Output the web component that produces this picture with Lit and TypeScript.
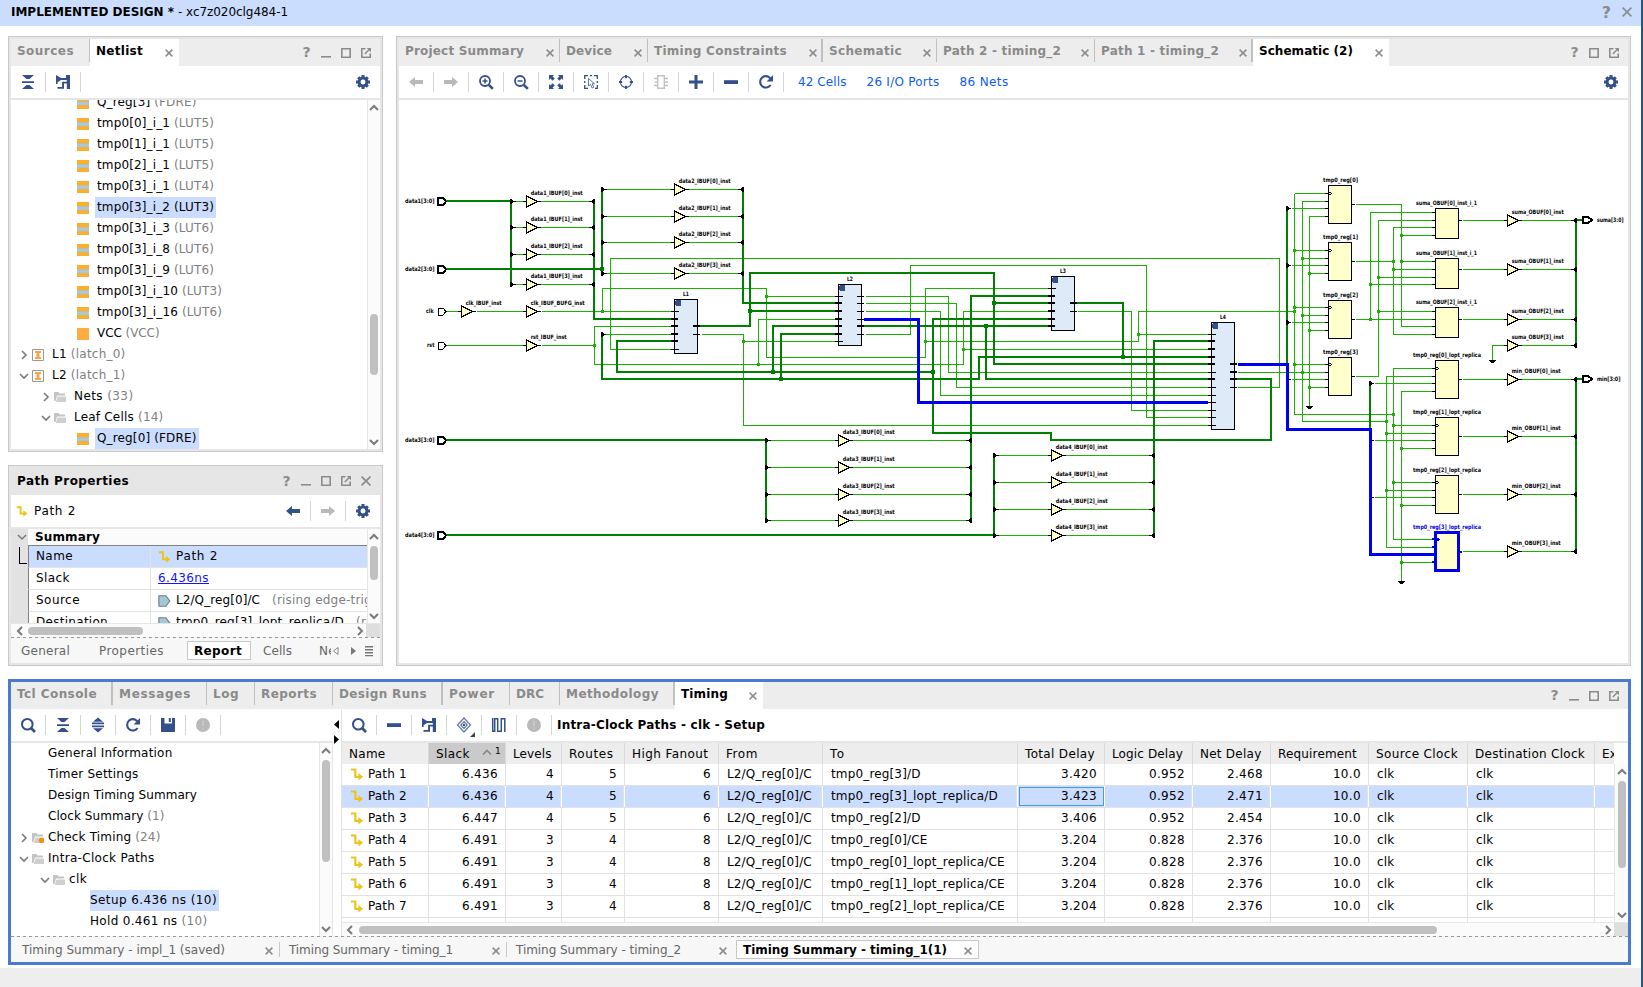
import { LitElement, html, svg, css, nothing } from "lit";
import { customElement } from "lit/decorators.js";

type Pt = [number, number];

const BLUE = "#34508a";
const GREY = "#8c8c8c";

const icons: Record<string, unknown> = {
  collapse: svg`<path fill=${BLUE} d="M2 1h12l-4.5 4h-3zM2 7.2h12v1.8H2zM2 15h12l-4.500-4h-3z"/>`,
  expand: svg`<path fill=${BLUE} d="M8 .6l5 4.200H3zM2 5.600h12v1.600H2zM2 8.600h12v1.600H2zM8 15.400l5-4.200H3z"/>`,
  hier: svg`<path fill=${BLUE} d="M1 1l5 3h5V1h4v14h-3.200V9.500H9v5.300H2.500v-1.700h4.600V7.800h4.700V5.900H6L2.600 8.200V10H1z"/>`,
  gear: svg`<circle cx="8" cy="8" r="3.900" fill="none" stroke=${BLUE} stroke-width="3"/><path stroke=${BLUE} stroke-width="3" d="M8 1v3M8 12v3M1 8h3M12 8h3M3.200 3.200l2 2M10.800 10.800l2 2M12.800 3.200l-2 2M5.200 10.800l-2 2"/><circle cx="8" cy="8" r="2.300" fill="#fff"/>`,
  back: svg`<path fill=${BLUE} d="M1 8l6-5v3h8v4H7v3z"/>`,
  backOff: svg`<path fill="#b9b9b9" d="M1 8l6-5v3h8v4H7v3z"/>`,
  fwdOff: svg`<path fill="#b9b9b9" d="M15 8L9 3v3H1v4h8v3z"/>`,
  zoomIn: svg`<circle cx="7" cy="7" r="5" fill="none" stroke=${BLUE} stroke-width="1.800"/><path stroke=${BLUE} stroke-width="2.600" d="M10.800 10.800l4 4"/><path stroke=${BLUE} stroke-width="1.500" d="M4.500 7h5M7 4.500v5"/>`,
  zoomOut: svg`<circle cx="7" cy="7" r="5" fill="none" stroke=${BLUE} stroke-width="1.800"/><path stroke=${BLUE} stroke-width="2.600" d="M10.800 10.800l4 4"/><path stroke=${BLUE} stroke-width="1.500" d="M4.500 7h5"/>`,
  fit: svg`<path fill=${BLUE} d="M1 1h5L4.600 2.400l2.200 2.200-2.200 2.200-2.200-2.200L1 6zM15 1v5l-1.400-1.400-2.200 2.200-2.200-2.200 2.200-2.200L10 1zM1 15v-5l1.400 1.400 2.200-2.200 2.200 2.200-2.200 2.200L6 15zM15 15h-5l1.400-1.400-2.200-2.200 2.200-2.200 2.200 2.200L15 10z"/>`,
  select: svg`<path fill="none" stroke=${BLUE} stroke-width="1.300" d="M1.700 5V1.700H5M11 1.700h3.300V5M1.700 11v3.300H5M7 1.700h2M1.700 7v2M14.300 7v2M12 14.300h2.300V11"/><path fill="#fff" stroke="#4d669c" stroke-width=".9" d="M5.500 4.500v7.500l2-1.600 1.600 3.600 1.700-.8-1.600-3.400h2.300z"/>`,
  target: svg`<circle cx="8" cy="8" r="5.600" fill="none" stroke=${BLUE} stroke-width="1.100"/><path stroke=${BLUE} stroke-width="1.900" d="M8 1v3.200M8 11.800V15M1 8h3.200M11.800 8H15"/>`,
  chip: svg`<path fill="none" stroke="#c2c2c2" stroke-width="1.400" d="M4.700 1.700h6.600v12.600H4.700zM1 4.500h3.500M1 11.500h3.500M11.500 4.500H15M11.500 11.500H15M1.700 8h3M11.500 8H15"/>`,
  plus: svg`<path fill=${BLUE} d="M6.500 1h3v5.500H15v3H9.500V15h-3V9.500H1v-3h5.500z"/>`,
  minus: svg`<path fill=${BLUE} d="M1 6.200h14v3.800H1z"/>`,
  refresh: svg`<path fill="none" stroke=${BLUE} stroke-width="2.100" d="M12.600 11A5.700 5.700 0 1 1 12.300 4.300"/><path fill=${BLUE} d="M15 1v6.500H8.600z"/>`,
  search: svg`<circle cx="7.300" cy="7.300" r="5.300" fill="none" stroke=${BLUE} stroke-width="2"/><path stroke=${BLUE} stroke-width="2.600" d="M11 11l4 4"/>`,
  save: svg`<path fill=${BLUE} d="M1 1h3.500v5.500h7.500V1H15v14H1z"/><path fill=${BLUE} d="M8.800 1h2v4h-2z"/>`,
  alert: svg`<circle cx="8" cy="8" r="7" fill="#b9b9b9"/><path fill="#c9c9c9" d="M7.100 3.500h1.800v5.600H7.100zM7.100 10.600h1.800v1.900H7.100z"/>`,
  diamond: svg`<path fill="none" stroke="#5e78ad" stroke-width="1.200" d="M8 1l6.500 7L8 15 1.500 8zM8 4.500L11.300 8 8 11.500 4.700 8z"/><circle cx="8" cy="8" r="1.200" fill=${BLUE}/>`,
  wave: svg`<path fill="none" stroke=${BLUE} stroke-width="1.500" d="M1 14.200h2.700V1.800h3v12.400h3.600V1.800h3.500V15M1.700 14.200V1"/>`,
  path: svg`<path fill="none" stroke="#ecc51c" stroke-width="2.300" d="M1 2.700h4.700v7.800H10"/><path fill="#ecc51c" d="M9 6.500l5 4-5 4z"/>`,
  pin: svg`<path fill="#a5c6d6" stroke="#6d7f88" stroke-width="1.300" d="M1 2h8l4.500 6-4.500 6H1z"/>`,
};

const icon = (name: string, size = 16) =>
  html`<svg class="ic" width=${size} height=${size} viewBox="0 0 16 16">${icons[name]}</svg>`;

const close = (s = 8) => html`<svg class="ic x" width=${s} height=${s} viewBox="0 0 8 8"><path stroke=${GREY} stroke-width="1.500" d="M.6.6l6.800 6.800M7.400.6L.6 7.400"/></svg>`;
const minIcon = html`<svg class="ic" width="10" height="10" viewBox="0 0 10 10"><path fill=${GREY} d="M0 8h10v1.600H0z"/></svg>`;
const maxIcon = html`<svg class="ic" width="10" height="10" viewBox="0 0 10 10"><path fill="none" stroke=${GREY} stroke-width="1.600" d="M.8.800h8.400v8.400H.8z"/></svg>`;
const popIcon = html`<svg class="ic" width="10" height="10" viewBox="0 0 10 10"><path fill="none" stroke=${GREY} stroke-width="1.600" d="M4.500.8H.8v8.400h8.400V5.500"/><path stroke=${GREY} stroke-width="1.500" d="M3.800 6l4.500-4.500"/><path fill=${GREY} d="M5.700 0H10v4.300z"/></svg>`;
const bigX = html`<svg class="ic" width="10" height="10" viewBox="0 0 10 10"><path stroke=${GREY} stroke-width="1.700" d="M.6.6l8.800 8.800M9.400.6L.6 9.400"/></svg>`;
const chev = (dir: "u" | "d" | "l" | "r", w = 2) => {
  const d = { u: "M1 7l4-4 4 4", d: "M1 3l4 4 4-4", l: "M7 1L3 5l4 4", r: "M3 1l4 4-4 4" }[dir];
  return html`<svg class="ic" width="10" height="10" viewBox="0 0 10 10"><path fill="none" stroke="#7a7a7a" stroke-width=${w} d=${d}/></svg>`;
};

const treeIcons: Record<string, unknown> = {
  cell: svg`<path fill="#fcae2c" d="M0 0h12v12H0z"/><path fill="#b7bfa4" d="M0 4h12v4.500H0z"/><path fill="#adc8d8" d="M0 5h12v2.500H0z"/>`,
  vcc: svg`<path fill="#ffad40" d="M0 0h12v12H0z"/>`,
  inst: svg`<path fill="#fff" stroke="#999" d="M.5.5h11v11H.5z"/><path fill="#f9a64a" d="M3 2h6v2H7.500v4H9v2H3V8h1.500V4H3z"/>`,
  folder: svg`<path fill="#c4c4c4" d="M0 1h4.500l1 1.500H11v2H3L1.500 10H0z"/><path fill="#cfcfcf" d="M3.500 5.500H12V11H1.800z"/>`,
  warn: svg`<path fill="#c4c4c4" d="M0 1h4.500l1 1.500H11v2H3L1.500 10H0z"/><path fill="#cfcfcf" d="M3.500 5.500H12V11H1.800z"/><circle cx="9.500" cy="8.500" r="2.800" fill="#f7900a"/>`,
};

interface Node { t: string; n?: string; lvl: number; ic?: string; ex?: "r" | "d"; sel?: boolean; w?: number }

const netlist: Node[] = [
  { t: "Q_reg[3]", n: "(FDRE)", lvl: 2, ic: "cell", w: 98.5 },
  { t: "tmp0[0]_i_1", n: "(LUT5)", lvl: 2, ic: "cell", w: 116 },
  { t: "tmp0[1]_i_1", n: "(LUT5)", lvl: 2, ic: "cell", w: 116 },
  { t: "tmp0[2]_i_1", n: "(LUT5)", lvl: 2, ic: "cell", w: 116 },
  { t: "tmp0[3]_i_1", n: "(LUT4)", lvl: 2, ic: "cell", w: 116 },
  { t: "tmp0[3]_i_2", n: "(LUT3)", lvl: 2, ic: "cell", sel: true, w: 116 },
  { t: "tmp0[3]_i_3", n: "(LUT6)", lvl: 2, ic: "cell", w: 116 },
  { t: "tmp0[3]_i_8", n: "(LUT6)", lvl: 2, ic: "cell", w: 116 },
  { t: "tmp0[3]_i_9", n: "(LUT6)", lvl: 2, ic: "cell", w: 116 },
  { t: "tmp0[3]_i_10", n: "(LUT3)", lvl: 2, ic: "cell", w: 124 },
  { t: "tmp0[3]_i_16", n: "(LUT6)", lvl: 2, ic: "cell", w: 124 },
  { t: "VCC", n: "(VCC)", lvl: 2, ic: "vcc", w: 61.5 },
  { t: "L1", n: "(latch_0)", lvl: 0, ic: "inst", ex: "r", w: 72.5 },
  { t: "L2", n: "(latch_1)", lvl: 0, ic: "inst", ex: "d", w: 72.5 },
  { t: "Nets", n: "(33)", lvl: 1, ic: "folder", ex: "r", w: 58.5 },
  { t: "Leaf Cells", n: "(14)", lvl: 1, ic: "folder", ex: "d", w: 88.5 },
  { t: "Q_reg[0]", n: "(FDRE)", lvl: 2, ic: "cell", sel: true, w: 98.5 },
];

const timingTree: Node[] = [
  { t: "General Information", lvl: 0, w: 123.5 },
  { t: "Timer Settings", lvl: 0, w: 89.5 },
  { t: "Design Timing Summary", lvl: 0, w: 148 },
  { t: "Clock Summary", n: "(1)", lvl: 0, w: 115.5 },
  { t: "Check Timing", n: "(24)", lvl: 0, ic: "warn", ex: "r", w: 111.5 },
  { t: "Intra-Clock Paths", lvl: 0, ic: "folder", ex: "d", w: 105.5 },
  { t: "clk", lvl: 1, ic: "folder", ex: "d", w: 17 },
  { t: "Setup 6.436 ns (10)", lvl: 2, sel: true, w: 126 },
  { t: "Hold 0.461 ns", n: "(10)", lvl: 2, w: 116.5 },
];

const cols = ["Name", "Slack", "Levels", "Routes", "High Fanout", "From", "To", "Total Delay", "Logic Delay", "Net Delay", "Requirement", "Source Clock", "Destination Clock", "Ex"];
const colW = [35.5, 33, 37.5, 43.5, 75.5, 31, 14.5, 69, 70, 60.5, 78, 81, 109, 0];
const rows = [
  ["Path 1", "6.436", "4", "5", "6", "L2/Q_reg[0]/C", "tmp0_reg[3]/D", "3.420", "0.952", "2.468"],
  ["Path 2", "6.436", "4", "5", "6", "L2/Q_reg[0]/C", "tmp0_reg[3]_lopt_replica/D", "3.423", "0.952", "2.471"],
  ["Path 3", "6.447", "4", "5", "6", "L2/Q_reg[0]/C", "tmp0_reg[2]/D", "3.406", "0.952", "2.454"],
  ["Path 4", "6.491", "3", "4", "8", "L2/Q_reg[0]/C", "tmp0_reg[0]/CE", "3.204", "0.828", "2.376"],
  ["Path 5", "6.491", "3", "4", "8", "L2/Q_reg[0]/C", "tmp0_reg[0]_lopt_replica/CE", "3.204", "0.828", "2.376"],
  ["Path 6", "6.491", "3", "4", "8", "L2/Q_reg[0]/C", "tmp0_reg[1]_lopt_replica/CE", "3.204", "0.828", "2.376"],
  ["Path 7", "6.491", "3", "4", "8", "L2/Q_reg[0]/C", "tmp0_reg[2]_lopt_replica/CE", "3.204", "0.828", "2.376"],
].map((r) => [...r, "10.0", "clk", "clk", ""]);
const numeric = new Set([1, 2, 3, 4, 7, 8, 9, 10]);

/* ---------- schematic geometry ---------- */
const thin = [
  "M446 311H458M476 311H523M541 311H671M446 345H523M541 345H594M594 364V326H671M594 364H963V311H1048",
  "M602 311V288H766V357H925V288H1048M766 296H835M925 341H1138V311H1294M1138 334H1208M963 349H1208",
  "M758 364V319H835M701 334H743V425H1208M743 341H835M671 349H610V258H1279V387H1237",
  "M605 334H671M865 296H948V372H1208M865 303H956V387H1208M865 311H940V395H1208M865 334H910V265H1146V417H1208",
  "M1077 311H1131V410H1208M1237 372H1325",
  "M1294 193V414H1393M1294 193H1325M1294 250H1325M1294 307H1325M1294 364H1325",
  "M1302 421V201H1325M1302 421H1386M1302 258H1325M1302 315H1325",
  "M1291 208H1325M1291 265H1325M1291 322H1325M1291 379H1325",
  "M1309 406V216H1325M1309 273H1325M1309 330H1325M1309 387H1325",
  "M1355 204H1401V326H1432M1401 235H1432M1401 261H1432M1355 261H1393M1432 227H1393V334H1432M1393 269H1432",
  "M1355 319H1432M1370 319V212H1432M1370 284H1432M1355 376H1378V220H1432M1378 277H1432M1378 311H1432",
  "M1462 220H1504M1462 269H1504M1462 319H1504M1504 345H1492V360",
  "M1393 539V368H1432M1393 425H1432M1393 482H1432M1393 539H1432M1386 547V376H1432M1386 433H1432M1386 490H1432M1386 547H1432",
  "M1401 581V391H1432M1401 448H1432M1401 505H1432M1401 562H1432M1374 383H1432M1374 440H1432M1374 497H1432",
  "M1462 379H1504M1462 436H1504M1462 494H1504M1462 551H1504",
].join("");

const thick = [
  "M446 201H511M511 200V286M446 269H602M602 188V274M594 200V319H671M743 188V303H835",
  "M701 326H750V273H994V364H1208M994 303H1048M750 311H835",
  "M671 341H617V372H933M933 433V319H1048M933 433H1051V440H1271V379H1237M773 372V326H835",
  "M602 333V379H979V357H1208M781 379V334H835M1077 303H1123V357M865 326H1048M986 326V379H1208",
  "M1048 296H971V521M446 440H766M766 439V521M446 535H994M994 454V536M1208 341H1154V536",
  "M1287 207V364M1370 382V430M1576 220V346M1576 379V552M1576 220H1582M1576 379H1582",
].join("");

const thinDots: Pt[] = [
  [602, 311], [594, 345], [766, 296], [758, 364], [743, 341], [925, 341], [963, 349], [1138, 334],
  [1294, 250], [1294, 307], [1294, 311], [1294, 364], [1302, 258], [1302, 315], [1302, 372],
  [1309, 273], [1309, 330], [1309, 387], [1401, 235], [1401, 261], [1393, 261], [1393, 269],
  [1370, 319], [1370, 284], [1378, 277], [1378, 311], [1393, 414], [1393, 425], [1393, 482],
  [1386, 421], [1386, 433], [1386, 490], [1401, 448], [1401, 505], [1401, 562],
];
const thickDots: Pt[] = [[602, 269], [750, 311], [773, 372], [781, 379], [933, 372], [986, 326], [994, 303], [1123, 357]];

interface Buf { x: number; y: number; t: string; w: number; inX?: number; outX?: number }
const bank = (name: string, x: number, ys: number[], inX?: number, outX?: number, w = 52): Buf[] =>
  ys.map((y, i) => ({ x, y, t: `${name}[${i}]_inst`, w, inX, outX }));
const bufs: Buf[] = [
  ...bank("data1_IBUF", 526, [201, 227, 254, 284], 511, 594),
  ...bank("data2_IBUF", 674, [189, 216, 242, 273], 602, 743),
  ...bank("data3_IBUF", 838, [440, 467, 494, 520], 766, 971),
  ...bank("data4_IBUF", 1051, [455, 482, 509, 535], 994, 1154),
  { x: 461, y: 311, t: "clk_IBUF_inst", w: 36 },
  { x: 526, y: 311, t: "clk_IBUF_BUFG_inst", w: 54 },
  { x: 526, y: 345, t: "rst_IBUF_inst", w: 36 },
  ...bank("suma_OBUF", 1507, [220, 269, 319, 345], undefined, 1576),
  ...bank("min_OBUF", 1507, [379, 436, 494, 551], undefined, 1576, 49),
];

interface Block { x: number; y: number; h: number; t: string; l: [number, number][]; r: [number, number][] }
const blocks: Block[] = [
  { x: 674, y: 299, h: 54, t: "L1", l: [[311, 1], [319, 2], [326, 2], [334, 2], [341, 2], [349, 1]], r: [[326, 2], [334, 1]] },
  { x: 838, y: 284, h: 61, t: "L2", l: [[296, 1], [303, 2], [311, 2], [319, 2], [326, 2], [334, 2], [341, 1]], r: [[296, 1], [303, 1], [311, 1], [319, 1], [326, 2], [334, 1]] },
  { x: 1051, y: 276, h: 54, t: "L3", l: [[288, 1], [296, 2], [303, 2], [311, 2], [319, 2], [326, 2]], r: [[303, 2], [311, 1]] },
  { x: 1211, y: 322, h: 107, t: "L4", l: [[334, 1], [341, 2], [349, 2], [357, 2], [364, 2], [372, 1], [379, 2], [387, 1], [395, 1], [402, 1], [410, 1], [417, 1], [425, 1]], r: [[364, 2], [372, 2], [379, 2], [387, 1]] },
];

interface Leaf { x: number; y: number; h: number; t: string; lx: number; lw: number; pins: number[]; out: number; ff?: boolean; sel?: boolean }
const leaves: Leaf[] = [
  ...[[185, 193, 204], [242, 250, 261], [300, 307, 319], [357, 364, 376]].map(([y, p, out], i) => ({
    x: 1328, y, h: 38, t: `tmp0_reg[${i}]`, lx: 1323, lw: 35, pins: [p, p + 8, p + 15, p + 23], out, ff: true })),
  ...[[208, 220, [212, 220, 227, 235]], [258, 269, [261, 269, 277, 284]], [307, 319, [311, 319, 326, 334]]].map((v, i) => ({
    x: 1435, y: v[0] as number, h: 30, t: `suma_OBUF[${i}]_inst_i_1`, lx: 1416, lw: 61, pins: v[2] as number[], out: v[1] as number })),
  ...[[360, 368, 379], [417, 425, 436], [475, 482, 494], [532, 539, 551]].map(([y, p, out], i) => ({
    x: 1435, y, h: 38, t: `tmp0_reg[${i}]_lopt_replica`, lx: 1413, lw: 68, pins: [p, p + 8, p + 15, p + 23], out, ff: true, sel: i === 3 })),
];

const label = (x: number, y: number, w: number, t: string, fill = "#000") =>
  svg`<text class="lbl" x=${x} y=${y} textLength=${w} lengthAdjust="spacingAndGlyphs" fill=${fill}>${t}</text>`;

const drawBuf = (b: Buf) => svg`
  ${b.inX ? svg`<path class="thin" d="M${b.inX + 4}.5 ${b.y}.5H${b.x - 3}"/><path class="tap" d="M${b.inX - 1} ${b.y - 2}h2l1 2h3v1h-3l-1 2h-2z"/>` : nothing}
  ${b.outX ? svg`<path class="thin" d="M${b.x + 15} ${b.y}.5H${b.outX - 4}"/><path class="tap" d="M${b.outX + 1} ${b.y - 2}h-2l-1 2h-3v1h3l1 2h2z"/>` : nothing}
  <path class="blk" d="M${b.x - 3} ${b.y}.5H${b.x}M${b.x + 11} ${b.y}.5h4"/>
  <path class="leaf" d="M${b.x}.5 ${b.y - 5}v11l11-5.500z"/>
  ${label(b.x + 4.700, b.y - 6.500, b.w, b.t)}`;

const drawBlock = (b: Block) => svg`
  <rect x=${b.x + 0.5} y=${b.y + 0.5} width="23" height=${b.h} fill="#dfeaf8" stroke="#000"/>
  <path fill=${BLUE} d="M${b.x + 2} ${b.y + 1}h4l1 1v4l-1 1h-4l-1-1v-4z"/>
  ${b.l.map(([y, w]) => svg`<rect x=${b.x - 3} y=${w === 2 ? y - 1 : y} width=${w === 2 ? 7 : 8} height=${w}/>`)}
  ${b.r.map(([y, w]) => svg`<rect x=${b.x + 19} y=${w === 2 ? y - 1 : y} width="7" height=${w}/>`)}
  ${label(b.x + 9, b.y - 3, 6, b.t)}`;

const drawLeaf = (l: Leaf) => {
  const c = l.sel ? "#0000e8" : "#000";
  return svg`
  <rect x=${l.x + 0.5} y=${l.y + 0.5} width="23" height=${l.h} fill="#ffffcc" stroke=${c} stroke-width=${l.sel ? 3 : 1}/>
  ${l.pins.map((y) => svg`<rect x=${l.x - 3} y=${l.sel ? y - 1 : y} width="3" height=${l.sel ? 2 : 1} fill=${c}/>`)}
  <rect x=${l.x + 24} y=${l.out} width="3" height=${l.sel ? 2 : 1} fill=${c}/>
  ${l.ff ? svg`<path d="M${l.x + 1} ${l.pins[0] - 1}l2.500 1.500l-2.500 1.500" fill="none" stroke=${c} stroke-width=${l.sel ? 2 : 1}/>` : nothing}
  ${label(l.lx, l.y - 3, l.lw, l.t, c)}`;
};

const inPort = (y: number, t: string, bus: boolean) => svg`
  <path d="M438 ${y - 3}h5l3 3.500l-3 3.500h-5z" fill="#fff" stroke="#000" stroke-width=${bus ? 2 : 1}/>
  ${bus ? label(405, y + 2, 29.500, t) : label(t === "clk" ? 426 : 427, y + 2, 7.500, t)}`;
const outPort = (y: number, t: string, w: number) => svg`
  <path d="M1583 ${y - 3}h5l4 3l-4 3h-5z" fill="#fff" stroke="#000" stroke-width="2"/>
  ${label(1597, y + 2, w, t)}`;
const ground = (x: number, y: number) => svg`<path d="M${x - 3} ${y}h7v1h-1v1h-1v1h-3v-1h-1v-1h-1z"/>`;

@customElement("app-root")
export class AppRoot extends LitElement {
  static styles = css`
    :host { display: flex; width: 1643px; height: 987px; overflow: hidden; background: #fff; color: #000;
      font: 12px/15px "DejaVu Sans", sans-serif; letter-spacing: .2px; white-space: nowrap; cursor: default; }
    * { box-sizing: border-box; }
    .ic { display: block; flex: none; }
    .page { flex: 1; display: flex; flex-direction: column; min-width: 0; }
    .edge { width: 2px; background: #2b547b; }
    .title { height: 26px; background: #cbddff; display: flex; align-items: center; padding: 0 9px 2px 11px; gap: 4px; }
    .title b, .tab, .bold { font-weight: bold; }
    .grow { flex: 1; min-width: 0; }
    .q { font-weight: bold; font-size: 14px; color: #8c8c8c; letter-spacing: 0; width: 9px; text-align: center; }
    .title .q { margin-right: 6px; font-size: 16px; width: 11px; }
    .work { flex: 1; padding: 10px 10px 3px 8px; display: flex; flex-direction: column; gap: 13px; min-height: 0; }
    .top { height: 630px; display: flex; gap: 13px; }
    .left { width: 375px; display: flex; flex-direction: column; gap: 13px; }
    .panel { border: 1px solid #c9c9c9; background: #e6e6e6; padding: 2px; display: flex; flex-direction: column; min-height: 0; min-width: 0; }
    .nets { height: 416px; }
    .props { height: 201px; }
    .schem { flex: 1; }
    .timing { height: 286px; border: 3px solid #4a7bce; padding: 0; background: #fff; }
    .tabs { height: 27px; background: #ededed; display: flex; flex: none; }
    .tab { height: 23px; display: flex; align-items: center; color: #8a8a8a; padding: 2px 5px 0 6px; border-right: 1px solid #c0c0c0; }
    .tab.wide { border-right-width: 2px; padding-right: 4px; }
    .tab .x { margin: 3px 0 0 auto; }
    .tab.on { height: 27px; background: #fff; color: #000; border: 0; padding: 0 6px 2px 6px; }
    .win { margin-left: auto; display: flex; align-items: center; gap: 10px; padding-right: 9px; }
    .bar { height: 34px; background: #fff; border-bottom: 2px solid #e6e6e6; display: flex; align-items: center; flex: none; }
    .btn { width: 35px; height: 20px; border-right: 1px solid #d6d6d6; display: flex; align-items: center; justify-content: center; position: relative; }
    .btn.end { border: 0; margin-left: auto; }
    .drop { position: absolute; right: 6px; bottom: -2px; border-left: 5px solid transparent; border-bottom: 5px solid #444; }
    .link { color: #0d5cf5; }
    .stat { margin-left: 14px; display: flex; gap: 20px; padding-top: 1px; }
    .body { flex: 1; display: flex; background: #fff; min-height: 0; overflow: hidden; }
    .tree { flex: 1; min-width: 0; overflow: hidden; }
    .nets .tree { display: flex; flex-direction: column; justify-content: flex-end; }
    .row { height: 21px; display: flex; align-items: center; flex: none; }
    .arrow { width: 10px; margin-right: 3px; flex: none; }
    .slot { width: 12px; margin-right: 5px; flex: none; }
    .slot svg { display: block; margin-top: 1px; }
    .txt { height: 21px; padding: 3px 2px 0; }
    .sel { background: #cbddff; }
    .n { color: #808080; }
    .sel .n { color: #000; }
    .l0 { padding-left: 8px; gap: 1px; } .l1 { padding-left: 30px; gap: 1px; } .l2 { padding-left: 52px; gap: 1px; }
    .nets .l0 .slot, .nets .l1 .slot { margin-left: -1px; margin-right: 6px; }
    .nets .l0 .txt, .nets .l1 .txt { margin-left: -1px; }
    .tt .l0 { padding-left: 8px; gap: 0; } .tt .l1 { padding-left: 29px; gap: 0; } .tt .l2 { padding-left: 50px; gap: 0; }
    .tt .txt { padding-left: 0; margin-left: -1px; }
    .tt .slot { margin-right: 5px; }
    .vs { width: 13px; background: #fbfbfb; border-left: 1px solid #e6e6e6; display: flex; flex-direction: column; align-items: center; padding: 3px 0 2px; flex: none; }
    .thumb { background: #c0c0c0; border-radius: 4px; width: 8px; }
    .vs .end { margin-top: auto; }
    .hs { height: 14px; background: #fbfbfb; border-top: 1px solid #e6e6e6; display: flex; align-items: center; flex: none; }
    .hs .thumb { height: 8px; }
    .corner { width: 14px; height: 14px; background: #dedede; margin-left: 1px; }
    .phead { height: 27px; display: flex; align-items: center; padding: 0 0 1px 6px; flex: none; }
    .pname { height: 34px; flex: none; background: #fff; border-bottom: 2px solid #e6e6e6; display: flex; align-items: center; }
    .pname > .ic { margin: 0 5px; }
    .pname .btn + .btn { border-right: 0; border-left: 1px solid #d6d6d6; }
    .pname .btn { border-right: 0; }
    .gut { width: 17px; background: #e2e2e2; display: flex; flex-direction: column; flex: none; }
    .gut i { width: 8px; height: 17px; margin: 5px 0 0 8px; border: solid #000; border-width: 0 0 1px 1px; }
    .gut .ic { margin: 3px 0 0 6px; }
    .ptab { flex: 1; min-width: 0; overflow: hidden; }
    .sum { height: 16px; background: #fbfbfb; padding-left: 7px; font-weight: bold; line-height: 16px; }
    .pr { height: 22px; display: grid; grid-template-columns: 122px 1fr; border-left: 1px solid #808080; border-bottom: 1px solid #e2e2e2; }
    .pr:nth-child(2) { height: 23px; border-top: 1px solid #808080; }
    .pr > div { display: flex; align-items: center; padding-left: 7px; border-right: 1px solid #e2e2e2; overflow: hidden; }
    .pr > div + div { border: 0; gap: 4px; }
    .pr .g { color: #808080; margin-left: 8px; }
    .pr u { color: #1414ff; }
    .dash { height: 1px; flex: none; background: repeating-linear-gradient(90deg, #999 0 3px, #f2f2f2 3px 6px); }
    .btabs { height: 25px; flex: none; background: #f7f7f7; display: flex; align-items: center; color: #666; }
    .bt { height: 20px; display: flex; align-items: center; flex: none; padding-top: 1px; }
    .box { background: #fff; border: 1px solid #c8c8c8; color: #000; font-weight: bold; height: 19px; }
    .btabs .sep { width: 1px; height: 15px; background: #c8c8c8; }
    .bt .x { margin-left: auto; margin-top: 1px; }
    .canvas { flex: 1; display: block; background: #fff; min-height: 0; }
    .lbl { font: bold 6px "DejaVu Sans", sans-serif; letter-spacing: 0; }
    .thin { fill: none; stroke: #18b400; stroke-width: 1; }
    .thick { fill: none; stroke: #008000; stroke-width: 2; }
    .blk { fill: none; stroke: #000; stroke-width: 1; }
    .leaf { fill: #ffffcc; stroke: #000; stroke-width: 1; }
    .tap { fill: #000; }
    .hot { fill: none; stroke: #0000f0; stroke-width: 3; }
    .split { flex: 1; display: flex; min-height: 0; }
    .tl { width: 322px; display: flex; flex-direction: column; }
    .tl .vs { width: 14px; border-right: 1px solid #e6e6e6; }
    .gap { width: 8px; display: flex; flex-direction: column; align-items: flex-start; padding: 11px 0 0 1px; gap: 6px; }
    .tr { flex: 1; min-width: 0; border-left: 1px solid #e2e2e2; display: flex; flex-direction: column; }
    .grid { flex: 1; min-width: 0; overflow: hidden; }
    .gr { display: grid; grid-template-columns: 87px 77px 56px 63px 94px 104px 195px 87px 88px 78px 98px 99px 127px 20px; height: 22px; border-bottom: 1px solid #e2e2e2; }
    .gr > div { border-right: 1px solid #e2e2e2; padding: 3px 7px 0 8px; display: flex; min-width: 0; overflow: hidden; letter-spacing: .15px; }
    .gr > div:last-child, .gh > div:last-child { border-right: 0; }
    .gr > .num { justify-content: flex-end; letter-spacing: .35px; }
    .gr.sel > div { border-right-color: #fff; box-shadow: inset -1px 0 #e2e2e2; }
    .gr .ic { margin: 0 3px 0 0; }
    .gr .foc { outline: 1px solid #4b9ad8; outline-offset: -2px; }
    .gr.gh { height: 21px; border: 0; background: #ededed; }
    .gr.gh > div { padding: 4px 0 0 7px; border-color: #dadada; }
    .gr.gh > .sorted { background: #cacaca; padding-right: 4px; }
    .gr .sorted svg { margin: 1px 3px 0 auto; }
    .sorted small { font-size: 9px; line-height: 8px; }
    .headpad { width: 14px; background: #fff; }
    .foot { height: 19px; background: #eee; }
  `;

  /* Spreads each measured label over its nominal width. */
  firstUpdated() {
    this.renderRoot.querySelectorAll<HTMLElement>("[data-w]").forEach((el) => {
      const target = Number(el.dataset.w);
      if (!target) return;
      el.style.letterSpacing = "0";
      const n = (el.textContent ?? "").trim().length;
      el.style.letterSpacing = `${((target + 1 - el.getBoundingClientRect().width) / n).toFixed(3)}px`;
    });
  }

  private s(t: unknown, w = 0, cls = "") {
    return html`<span class=${cls} data-w=${w}>${t}</span>`;
  }

  private node(n: Node) {
    return html`<div class="row l${n.lvl}">
      <div class="arrow">${n.ex ? chev(n.ex, 1.6) : nothing}</div>
      <div class="slot">${n.ic ? html`<svg width="12" height="12" viewBox="0 0 12 12">${treeIcons[n.ic]}</svg>` : nothing}</div>
      <div class="txt ${n.sel ? "sel" : ""}"><span data-w=${n.w ?? 0}>${n.t}${n.n ? html` <span class="n">${n.n}</span>` : nothing}</span></div>
    </div>`;
  }

  private tab(t: string, width: number, tw: number, o: { on?: boolean; x?: boolean; wide?: boolean } = {}) {
    return html`<div class="tab ${o.on ? "on" : ""} ${o.wide ? "wide" : ""}" style="width:${width}px">${this.s(t, tw)}${o.x ? close() : nothing}</div>`;
  }

  private btns(names: string[]) {
    return names.map((n) => html`<div class="btn">${icon(n)}${n === "diamond" ? html`<i class="drop"></i>` : nothing}</div>`);
  }

  private vscroll(off: number, len: number) {
    return html`<div class="vs">${chev("u")}<div class="thumb" style="height:${len}px;margin-top:${off}px"></div><div class="end">${chev("d")}</div></div>`;
  }

  private schematic() {
    return html`<svg class="canvas" width="1229" height="563" viewBox="399 100 1229 563" shape-rendering="crispEdges">
      <path class="thin" transform="translate(.5 .5)" d=${thin} />
      <path class="thick" d=${thick} stroke-linecap="square" />
      ${thinDots.map(([x, y]) => svg`<rect x=${x - 1} y=${y - 1} width="3" height="3" fill="#18b400"/>`)}
      ${thickDots.map(([x, y]) => svg`<rect x=${x - 2} y=${y - 2} width="4" height="4" fill="#008000"/>`)}
      ${bufs.map(drawBuf)} ${blocks.map(drawBlock)}
      ${[208, 265, 322, 379].map((y) => svg`<path class="tap" d="M1286 ${y - 2}h2l1 2h2v1h-2l-1 2h-2z"/>`)}
      ${[383, 440, 497].map((y) => svg`<path class="tap" d="M1369 ${y - 2}h2l1 2h2v1h-2l-1 2h-2z"/>`)}
      <path class="tap" d="M601 332h2l1 2h2v1h-2l-1 2h-2z"/>
      <path class="hot" d="M864 319.500H918.500V402.500H1208M1238 364.500H1287.500V429.500H1370.500V554.500H1434" />
      ${leaves.map(drawLeaf)}
      ${inPort(201, "data1[3:0]", true)} ${inPort(269, "data2[3:0]", true)} ${inPort(311, "clk", false)} ${inPort(345, "rst", false)}
      ${inPort(440, "data3[3:0]", true)} ${inPort(535, "data4[3:0]", true)}
      ${outPort(220, "suma[3:0]", 26.500)} ${outPort(379, "min[3:0]", 23.500)}
      ${ground(1309, 406)} ${ground(1401, 581)} ${ground(1492, 360)}
    </svg>`;
  }

  render() {
    const q = html`<span class="q">?</span>`;
    return html`
    <div class="page">
      <div class="title"><b data-w="162">IMPLEMENTED DESIGN *</b>${this.s("- xc7z020clg484-1", 109)}<div class="grow"></div>${q}${bigX}</div>
      <div class="work">
        <div class="top">
          <div class="left">
            <div class="panel nets">
              <div class="tabs">${this.tab("Sources", 79, 56)}${this.tab("Netlist", 89, 46, { on: true, x: true })}
                <div class="win">${q}${minIcon}${maxIcon}${popIcon}</div></div>
              <div class="bar">${this.btns(["collapse", "hier"])}<div class="btn end">${icon("gear")}</div></div>
              <div class="body"><div class="tree">${netlist.map((n) => this.node(n))}</div>${this.vscroll(201, 61)}</div>
            </div>
            <div class="panel props">
              <div class="phead bold">${this.s("Path Properties", 111)}<div class="win">${q}${minIcon}${maxIcon}${popIcon}${bigX}</div></div>
              <div class="pname">${icon("path", 13)}${this.s("Path 2", 41)}<div class="grow"></div>
                <div class="btn">${icon("back")}</div><div class="btn">${icon("fwdOff")}</div><div class="btn">${icon("gear")}</div></div>
              <div class="body">
                <div class="gut">${chev("d", 1.5)}<i></i></div>
                <div class="ptab">
                  <div class="sum">${this.s("Summary", 64)}</div>
                  <div class="pr sel"><div>${this.s("Name", 36)}</div><div>${icon("path", 14)}${this.s("Path 2", 41)}</div></div>
                  <div class="pr"><div>${this.s("Slack", 33)}</div><div><u data-w="50">6.436ns</u></div></div>
                  <div class="pr"><div>${this.s("Source", 43)}</div><div>${icon("pin", 14)}${this.s("L2/Q_reg[0]/C", 83)}<span class="g">(rising edge-triggered cell FDRE)</span></div></div>
                  <div class="pr"><div>${this.s("Destination", 71)}</div><div>${icon("pin", 14)}${this.s("tmp0_reg[3]_lopt_replica/D", 167)}<span class="g">(rising edge)</span></div></div>
                </div>
                ${this.vscroll(4, 34)}
              </div>
              <div class="hs"><div style="margin:0 3px 0 4px">${chev("l")}</div><div class="thumb" style="width:115px"></div><div class="grow"></div>${chev("r")}<div class="corner"></div></div>
              <div class="dash"></div>
              <div class="btabs">
                <div class="bt" style="width:88px;padding-left:10px">${this.s("General", 48)}</div>
                <div class="bt" style="width:88px">${this.s("Properties", 64)}</div>
                <div class="bt box" style="width:64px;padding-left:6px">${this.s("Report", 47)}</div>
                <div class="bt" style="width:68px;padding-left:12px">${this.s("Cells", 28)}</div>
                <div class="bt" style="width:12px;overflow:hidden">Nets</div>
                <svg class="ic" width="46" height="12" viewBox="0 0 46 12"><path fill="#fff" stroke="#888" d="M7 2.500v7L2.500 6z"/><path fill="#777" d="M20 2v8l5-4z"/><path fill="#777" d="M34 1h8v1.500h-8zM34 4h8v1.500h-8zM34 7h8v1.500h-8zM34 10h8v1.300h-8z"/></svg>
              </div>
            </div>
          </div>
          <div class="panel schem">
            <div class="tabs">
              ${this.tab("Project Summary", 161, 118, { x: true })}${this.tab("Device", 88, 45, { x: true })}
              ${this.tab("Timing Constraints", 175, 132, { x: true, wide: true })}${this.tab("Schematic", 114, 72, { x: true })}
              ${this.tab("Path 2 - timing_2", 158, 117, { x: true })}${this.tab("Path 1 - timing_2", 158, 117, { x: true, wide: true })}
              ${this.tab("Schematic (2)", 136, 93, { on: true, x: true })}
              <div class="win">${q}${maxIcon}${popIcon}</div>
            </div>
            <div class="bar">${this.btns(["backOff", "fwdOff", "zoomIn", "zoomOut", "fit", "select", "target", "chip", "plus", "minus", "refresh"])}
              <div class="stat link">${this.s("42 Cells", 47.5)}${this.s("26 I/O Ports", 72)}${this.s("86 Nets", 48)}</div>
              <div class="btn end">${icon("gear")}</div></div>
            <div class="body">${this.schematic()}</div>
          </div>
        </div>
        <div class="panel timing">
          <div class="tabs">
            ${this.tab("Tcl Console", 102, 79, { wide: true })}${this.tab("Messages", 94, 71)}${this.tab("Log", 48, 25)}${this.tab("Reports", 78, 55)}
            ${this.tab("Design Runs", 110, 87, { wide: true })}${this.tab("Power", 67, 45)}${this.tab("DRC", 50, 27)}${this.tab("Methodology", 115, 92, { wide: true })}
            ${this.tab("Timing", 88, 46, { on: true, x: true })}
            <div class="win">${q}${minIcon}${maxIcon}${popIcon}</div>
          </div>
          <div class="split">
            <div class="tl">
              <div class="bar">${this.btns(["search", "collapse", "expand", "refresh", "save", "alert"])}</div>
              <div class="body tt"><div class="tree">${timingTree.map((n) => this.node(n))}</div>${this.vscroll(4, 102)}</div>
            </div>
            <div class="gap">
              <svg class="ic" width="6" height="9" viewBox="0 0 6 9"><path d="M5 0v9L0 4.500z"/></svg>
              <svg class="ic" width="6" height="9" viewBox="0 0 6 9"><path d="M0 0v9l5-4.500z"/></svg>
            </div>
            <div class="tr">
              <div class="bar">${this.btns(["search", "minus", "hier", "diamond", "wave", "alert"])}<b data-w="207" style="margin:1px 0 0 5px">Intra-Clock Paths - clk - Setup</b></div>
              <div class="body">
                <div class="grid">
                  <div class="gr gh">${cols.map((c, i) => html`<div class=${i === 1 ? "sorted" : ""}>${this.s(c, colW[i])}${i === 1 ? html`<svg class="ic" width="10" height="8" viewBox="0 0 10 8"><path d="M1 6.500l4-4 4 4" fill="none" stroke="#888" stroke-width="1.600"/></svg><small>1</small>` : nothing}</div>`)}</div>
                  ${rows.map((r, k) => html`<div class="gr ${k === 1 ? "sel" : ""}">${r.map((c, i) => html`<div class="${numeric.has(i) ? "num" : ""} ${k === 1 && i === 7 ? "foc" : ""}">${i === 0 ? icon("path", 15) : nothing}<span>${c}</span></div>`)}</div>`)}
                  <div class="gr">${cols.map(() => html`<div></div>`)}</div>
                </div>
                <div style="display:flex;flex-direction:column"><div class="headpad" style="height:21px"></div>
                  <div class="vs" style="flex:1;width:14px">${chev("u")}<div class="thumb" style="height:87px;margin-top:4px"></div><div class="end">${chev("d")}</div></div></div>
              </div>
              <div class="hs"><div style="margin:0 4px 0 3px">${chev("l")}</div><div class="thumb" style="width:1078px"></div><div class="grow"></div>${chev("r")}<div class="corner"></div></div>
            </div>
          </div>
          <div class="dash"></div>
          <div class="btabs">
            <div class="bt" style="width:262px;padding-left:11px">${this.s("Timing Summary - impl_1 (saved)", 202)}${close()}</div>
            <div class="sep" style="margin:0 9px 0 6px"></div>
            <div class="bt" style="width:211px">${this.s("Timing Summary - timing_1", 163)}${close()}</div>
            <div class="sep" style="margin:0 9px 0 6px"></div>
            <div class="bt" style="width:211px">${this.s("Timing Summary - timing_2", 164)}${close()}</div>
            <div class="bt box" style="width:243px;margin-left:9px;padding:1px 6px 0 6px">${this.s("Timing Summary - timing_1(1)", 203)}${close()}</div>
          </div>
        </div>
      </div>
      <div class="foot"></div>
    </div>
    <div class="edge"></div>`;
  }
}
